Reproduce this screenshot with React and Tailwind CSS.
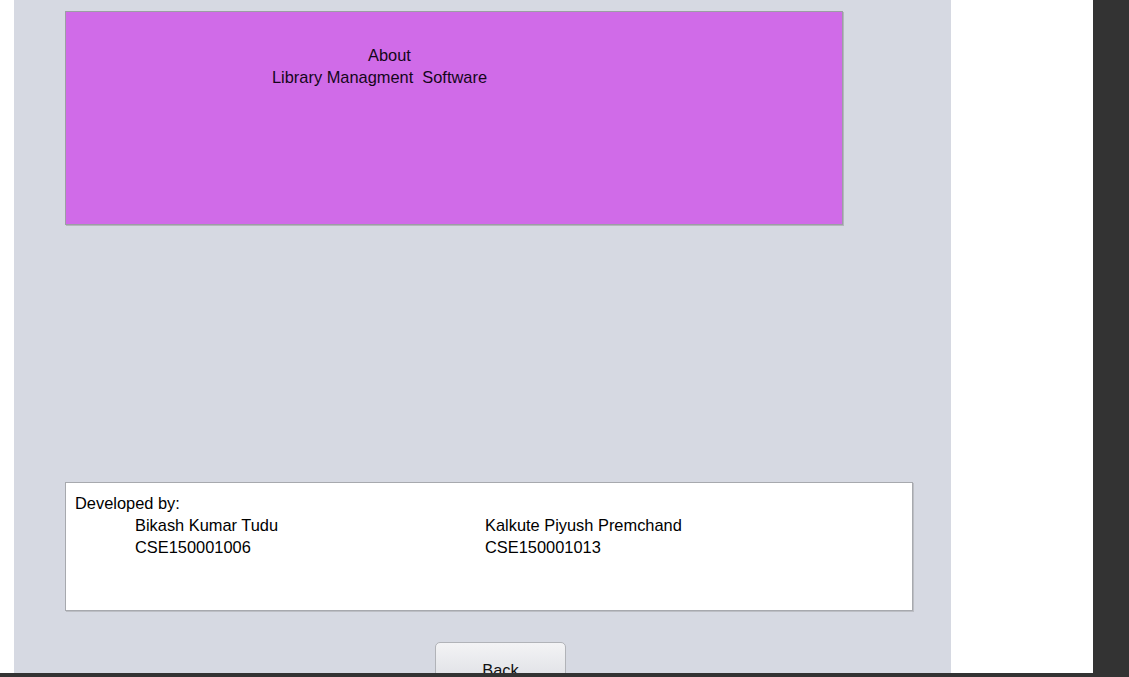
const font = { fontFamily: '"Liberation Sans", Arial, sans-serif' };

const Member = ({ name, roll }) => (
  <div className="flex flex-col">
    <span>{name}</span>
    <span>{roll}</span>
  </div>
);

export default function App() {
  return (
    <div
      className="flex h-[677px] w-[1129px] flex-col overflow-hidden bg-white text-[16.4px] leading-[22px] text-black"
      style={font}
    >
      <div className="flex h-[673px] shrink-0 flex-row">
        <div className="w-[14px] bg-white" />
        <div className="flex w-[937px] flex-col items-start overflow-hidden bg-[#d6d9e2] pt-[11px]">
          <section className="ml-[51px] h-[214px] w-[778px] shrink-0 border border-[#9c9ea4] bg-[#d06be8] pt-[32px] shadow-[1px_1px_0_#b4b6bc]">
            <div className="flex flex-col items-start text-[#14061a]">
              <span className="ml-[302px]">About</span>
              <span className="ml-[206px] whitespace-pre">Library Managment  Software</span>
            </div>
          </section>

          <section className="ml-[51px] mt-[257px] h-[129px] w-[848px] shrink-0 border border-[#a7a9ae] bg-white pl-[9px] pt-[9px] shadow-[1px_1px_0_#bcbec4]">
            <div>Developed by:</div>
            <div className="ml-[60px] grid grid-cols-[350px_1fr]">
              <Member name="Bikash Kumar Tudu" roll="CSE150001006" />
              <Member name="Kalkute Piyush Premchand" roll="CSE150001013" />
            </div>
          </section>

          <button className="ml-[421px] mt-[31px] h-[40px] w-[131px] shrink-0 rounded-[5px] border border-[#b1b3b8] bg-gradient-to-b from-[#f3f3f5] to-[#dfe0e5] pt-[15px] text-[16.4px] leading-[22px] text-[#111]">
            Back
          </button>
        </div>
        <div className="w-[142px] bg-white" />
        <div className="flex-1 bg-[#333333]" />
      </div>
      <div className="h-[4px] shrink-0 bg-[#333333]" />
    </div>
  );
}
